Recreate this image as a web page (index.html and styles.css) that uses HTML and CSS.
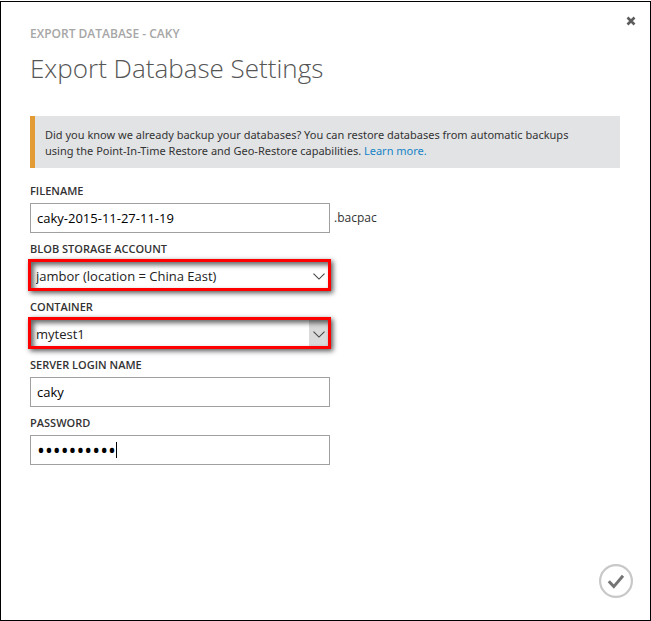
FILE: index.html
```html
<!DOCTYPE html>
<html lang="en">
<head>
<meta charset="utf-8">
<title>Export Database Settings</title>
<link rel="stylesheet" href="styles.css">
</head>
<body>
<main class="dialog">
  <button class="close" type="button" aria-label="Close">
    <svg width="10" height="10" viewBox="0 0 10 10"><path d="M1.5 1.5 8.5 8.5M8.5 1.5 1.5 8.5" fill="none" stroke="#5c5c5c" stroke-width="2.6"/></svg>
  </button>
  <header>
    <p class="eyebrow">EXPORT DATABASE - CAKY</p>
    <h1 class="title">Export Database Settings</h1>
  </header>
  <p class="notice">Did you know we already backup your databases? You can restore databases from automatic backups using the Point-In-Time Restore and Geo-Restore capabilities. <a href="#">Learn more.</a></p>
  <form class="form">
    <div class="field">
      <label for="filename">FILENAME</label>
      <div class="row">
        <input class="control" id="filename" type="text" value="caky-2015-11-27-11-19">
        <span class="suffix">.bacpac</span>
      </div>
    </div>
    <div class="field">
      <label for="account">BLOB STORAGE ACCOUNT</label>
      <div class="picker">
        <select class="control" id="account"><option>jambor (location = China East)</option></select>
        <span class="arrow"><svg width="12" height="7" viewBox="0 0 12 7"><path d="M.5.7 6 6.1 11.5.7" fill="none" stroke="#444" stroke-width="1.1"/></svg></span>
      </div>
    </div>
    <div class="field">
      <label for="container">CONTAINER</label>
      <div class="picker active">
        <select class="control" id="container"><option>mytest1</option></select>
        <span class="arrow"><svg width="12" height="7" viewBox="0 0 12 7"><path d="M.5.7 6 6.1 11.5.7" fill="none" stroke="#444" stroke-width="1.1"/></svg></span>
      </div>
    </div>
    <div class="field">
      <label for="login">SERVER LOGIN NAME</label>
      <input class="control" id="login" type="text" value="caky">
    </div>
    <div class="field">
      <label for="password">PASSWORD</label>
      <div class="secret">
        <input class="control" id="password" type="password" value="abcdefghij">
        <span class="caret"></span>
      </div>
    </div>
  </form>
  <footer class="actions">
    <button class="submit" type="button" aria-label="Complete">
      <svg width="34" height="34" viewBox="0 0 34 34"><circle cx="17" cy="17" r="15.9" fill="none" stroke="#c8c8c8" stroke-width="2.2"/><path d="M9.8 17.3 14.8 22.6 24 11.8" fill="none" stroke="#747474" stroke-width="3"/></svg>
    </button>
  </footer>
</main>
</body>
</html>
```
FILE: styles.css
```css
* { box-sizing: border-box; }
body {
  margin: 0;
  padding-top: 1px;
  background: #fff;
  color: #333;
  font: 12px/16px "Open Sans", "Noto Sans", sans-serif;
}
p, h1 { margin: 0; }
.dialog {
  position: relative;
  display: flex;
  flex-direction: column;
  min-height: calc(100vh - 1px);
  padding: 24px 30px 22px 29px;
  border: 1px solid #000;
}
button { padding: 0; border: 0; background: none; cursor: pointer; }
button svg { display: block; }
.close { position: absolute; top: 14px; right: 14px; }
.eyebrow { color: #a6a6a6; font-weight: 600; }
.title {
  margin-top: 8px;
  color: #555;
  font-size: 26px;
  font-weight: 300;
  line-height: 36px;
}
.notice {
  margin-top: 30px;
  padding: 11px 30px 9px 10px;
  border-left: 5px solid #e39b35;
  background: #e2e3e5;
  font-family: "Noto Sans", "Open Sans", sans-serif;
  font-size: 11px;
}
a { color: #1584c5; text-decoration: none; }
.form {
  display: flex;
  flex-direction: column;
  gap: 8px;
  margin-top: 15px;
}
.field { display: flex; flex-direction: column; gap: 4px; }
.field label { font-size: 11px; font-weight: 600; }
.row { display: flex; align-items: center; gap: 4px; }
.control {
  display: block;
  width: 300px;
  height: 30px;
  padding: 0 6px;
  border: 1px solid #a0a0a0;
  border-radius: 0;
  outline: 0;
  background: #fff;
  color: #000;
  font: 13px "Open Sans", "Noto Sans", sans-serif;
}
.control[type="password"] { font-size: 21px; }
.picker, .secret { position: relative; width: 300px; }
select.control { appearance: none; padding: 0 5px; color: #222; }
.picker::after {
  content: "";
  position: absolute;
  inset: -2px -1px 0 -2px;
  border: 3px solid #f00;
  box-shadow: 2px 2px 5px #000a, inset 3px 3px 5px #0009;
  pointer-events: none;
}
.arrow {
  position: absolute;
  inset: 1px 1px 1px auto;
  display: grid;
  place-items: center;
  width: 20px;
  pointer-events: none;
}
.active .arrow { background: #dadada; }
.caret {
  position: absolute;
  top: 7px;
  left: 86px;
  width: 1px;
  height: 16px;
  background: #000;
}
.actions { display: flex; justify-content: flex-end; margin-top: auto; }
.submit { margin-right: -13px; }
```
